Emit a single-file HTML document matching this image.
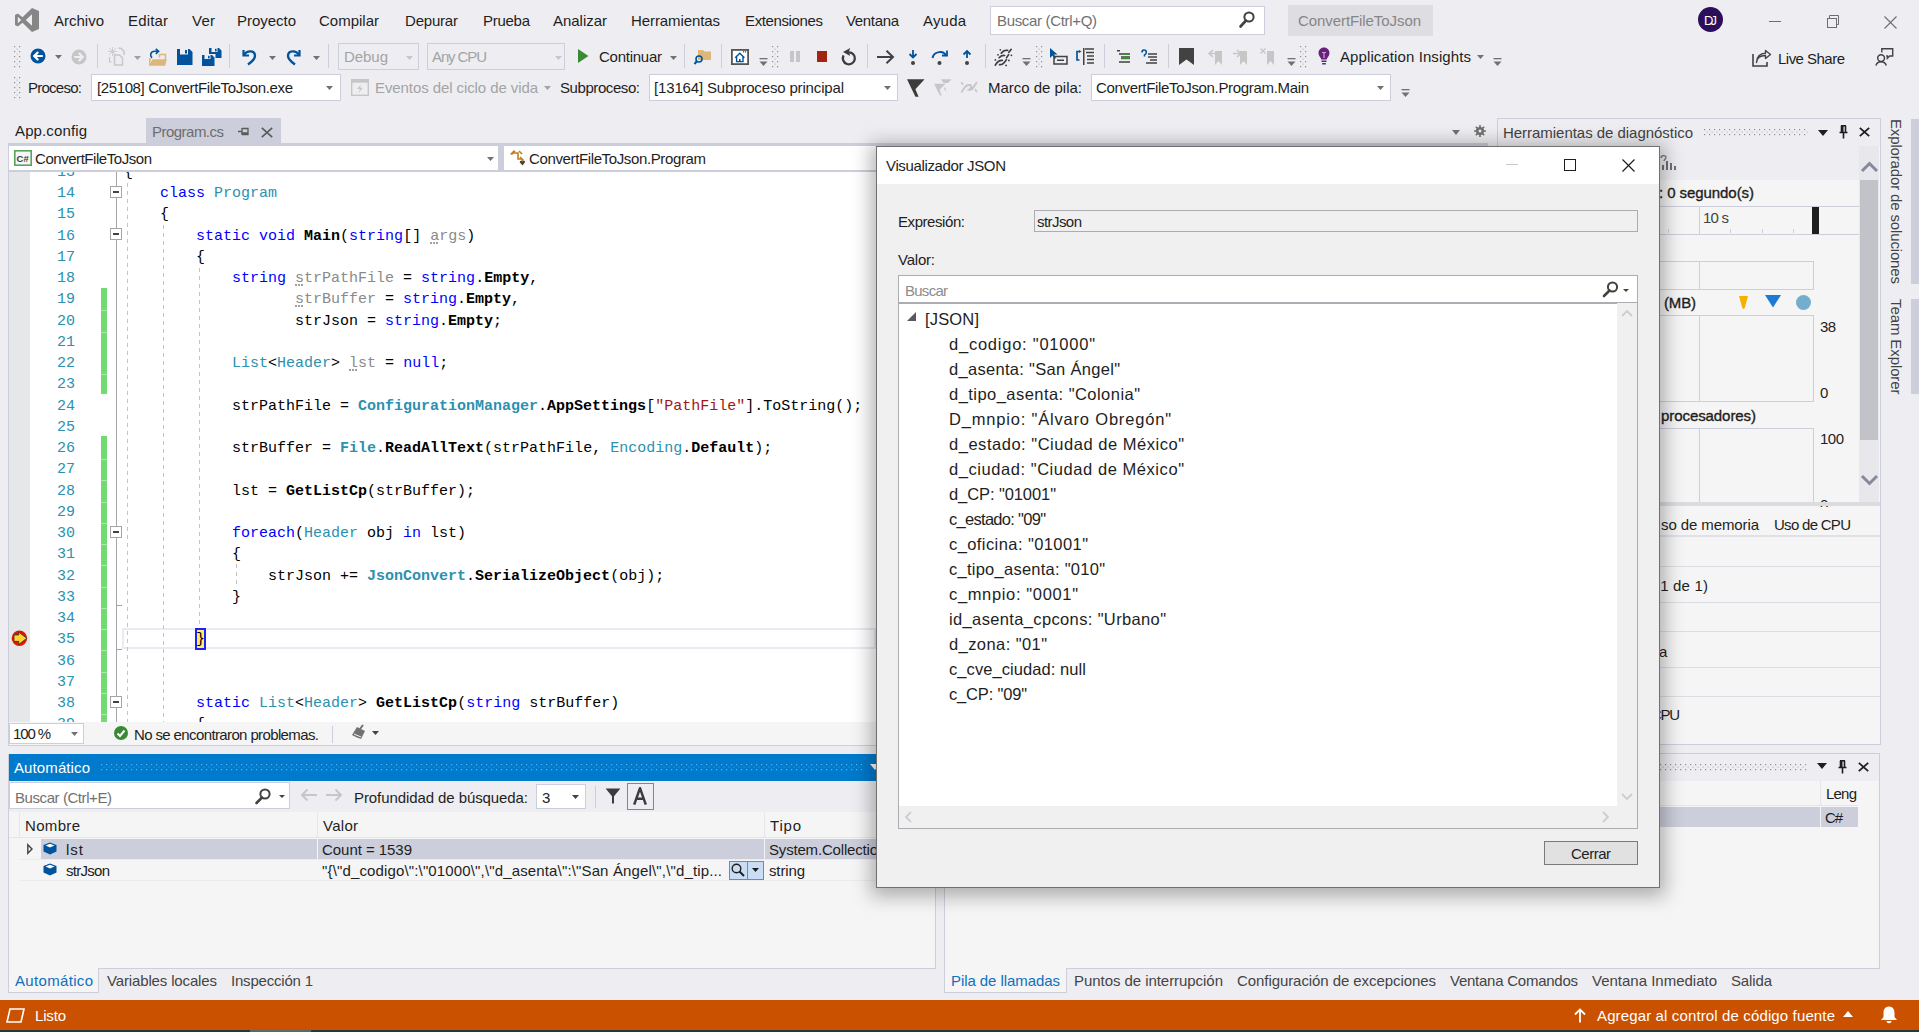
<!DOCTYPE html>
<html><head><meta charset="utf-8"><style>*{box-sizing:border-box;margin:0;padding:0}
html,body{width:1919px;height:1032px;overflow:hidden;background:#EEEEF2;font-family:"Liberation Sans",sans-serif;font-size:15px;color:#1E1E1E;position:relative}
.a{position:absolute}
svg.a{overflow:visible}
.t{position:absolute;white-space:pre;line-height:1}
</style></head><body>
<svg class="a" style="left:15px;top:8px;" width="24" height="24" viewBox="0 0 24 24"><path d="M17 0 L24 3 L24 21 L17 24 L7.5 14.8 L2.8 18.5 L0 17 L0 7 L2.8 5.5 L7.5 9.2 Z M17 6.3 L10.8 12 L17 17.7 Z M2.8 8.8 L2.8 15.2 L6.2 12 Z" fill="#868686" fill-rule="evenodd"/></svg><span class="t" id="t1" style="left:54px;top:13.00px;font-size:15px;color:#1E1E1E;font-weight:normal;font-family:'Liberation Sans';letter-spacing:-0.005px">Archivo</span><span class="t" id="t2" style="left:128px;top:13.00px;font-size:15px;color:#1E1E1E;font-weight:normal;font-family:'Liberation Sans';letter-spacing:0.163px">Editar</span><span class="t" id="t3" style="left:192px;top:13.00px;font-size:15px;color:#1E1E1E;font-weight:normal;font-family:'Liberation Sans';letter-spacing:0.242px">Ver</span><span class="t" id="t4" style="left:237px;top:13.00px;font-size:15px;color:#1E1E1E;font-weight:normal;font-family:'Liberation Sans';letter-spacing:-0.029px">Proyecto</span><span class="t" id="t5" style="left:319px;top:13.00px;font-size:15px;color:#1E1E1E;font-weight:normal;font-family:'Liberation Sans';letter-spacing:-0.002px">Compilar</span><span class="t" id="t6" style="left:405px;top:13.00px;font-size:15px;color:#1E1E1E;font-weight:normal;font-family:'Liberation Sans';letter-spacing:-0.201px">Depurar</span><span class="t" id="t7" style="left:483px;top:13.00px;font-size:15px;color:#1E1E1E;font-weight:normal;font-family:'Liberation Sans';letter-spacing:-0.275px">Prueba</span><span class="t" id="t8" style="left:553px;top:13.00px;font-size:15px;color:#1E1E1E;font-weight:normal;font-family:'Liberation Sans';letter-spacing:-0.029px">Analizar</span><span class="t" id="t9" style="left:631px;top:13.00px;font-size:15px;color:#1E1E1E;font-weight:normal;font-family:'Liberation Sans';letter-spacing:-0.094px">Herramientas</span><span class="t" id="t10" style="left:745px;top:13.00px;font-size:15px;color:#1E1E1E;font-weight:normal;font-family:'Liberation Sans';letter-spacing:-0.372px">Extensiones</span><span class="t" id="t11" style="left:846px;top:13.00px;font-size:15px;color:#1E1E1E;font-weight:normal;font-family:'Liberation Sans';letter-spacing:-0.344px">Ventana</span><span class="t" id="t12" style="left:923px;top:13.00px;font-size:15px;color:#1E1E1E;font-weight:normal;font-family:'Liberation Sans';letter-spacing:0.184px">Ayuda</span><div class="a" style="left:990px;top:6px;width:275px;height:29px;background:#FFFFFF;border:1px solid #CCCEDB"></div><span class="t" id="t13" style="left:997px;top:13.00px;font-size:15px;color:#717171;font-weight:normal;font-family:'Liberation Sans';letter-spacing:-0.329px">Buscar (Ctrl+Q)</span><svg class="a" style="left:1239px;top:11px;" width="16" height="17" viewBox="0 0 16 17"><circle cx="10" cy="6" r="4.6" fill="none" stroke="#424242" stroke-width="2"/><path d="M7 9.5 L1.5 15.5" stroke="#424242" stroke-width="2.6" stroke-linecap="round"/></svg><div class="a" style="left:1288px;top:5px;width:145px;height:31px;background:#DDDDE2"></div><span class="t" id="t14" style="left:1298px;top:13.00px;font-size:15px;color:#868686;font-weight:normal;font-family:'Liberation Sans';letter-spacing:-0.076px">ConvertFileToJson</span><div class="a" style="left:1698px;top:7px;width:25px;height:25px;border-radius:50%;background:#2B0F5A"></div><span class="t" id="t15" style="left:1704px;top:13.73px;font-size:13px;color:#FFFFFF;font-weight:normal;font-family:'Liberation Sans';letter-spacing:-2.891px">DJ</span><div class="a" style="left:1769px;top:21px;width:12px;height:1px;background:#6E6E6E"></div><svg class="a" style="left:1826px;top:15px;" width="14" height="14" viewBox="0 0 14 14"><rect x="1.5" y="3.5" width="9" height="9" fill="none" stroke="#6E6E6E" stroke-width="1"/><path d="M3.5 3.5 V0.5 H12.5 V9.5 H10.5" fill="none" stroke="#6E6E6E" stroke-width="1"/></svg><svg class="a" style="left:1884px;top:16px;" width="13" height="13" viewBox="0 0 13 13"><path d="M0.5 0.5 L12.5 12.5 M12.5 0.5 L0.5 12.5" stroke="#6E6E6E" stroke-width="1.1"/></svg><svg class="a" style="left:14px;top:46px" width="7" height="22"><defs><pattern id="p1" width="5" height="5" patternUnits="userSpaceOnUse"><rect x="0" y="0" width="1.2" height="1.2" fill="#8E8E8E"/><rect x="2.5" y="2.5" width="1.2" height="1.2" fill="#BDBDC2"/></pattern></defs><rect width="7" height="22" fill="url(#p1)"/></svg><svg class="a" style="left:30px;top:48px;" width="16" height="16" viewBox="0 0 16 16"><circle cx="8" cy="8" r="7.5" fill="#00539C"/><path d="M4 8 H12 M4.2 8 L7.6 4.6 M4.2 8 L7.6 11.4" stroke="#fff" stroke-width="2.2" fill="none" stroke-linecap="round"/></svg><svg class="a" style="left:55px;top:55px;" width="7" height="4" viewBox="0 0 7 4"><path d="M0 0 L7 0 L3.5 4 Z" fill="#717171"/></svg><svg class="a" style="left:71px;top:49px;" width="16" height="16" viewBox="0 0 16 16"><circle cx="8" cy="8" r="7.5" fill="#C6C6C6"/><path d="M4 8 H12 M11.8 8 L8.4 4.6 M11.8 8 L8.4 11.4" stroke="#EEEEF2" stroke-width="2.2" fill="none" stroke-linecap="round"/></svg><div class="a" style="left:97px;top:44px;width:1px;height:24px;background:#CCCEDB"></div><svg class="a" style="left:108px;top:47px;" width="18" height="19" viewBox="0 0 18 19"><path d="M4.5 0 V9 M0 4.5 H9 M1.3 1.3 L7.7 7.7 M7.7 1.3 L1.3 7.7" stroke="#C8C8C8" stroke-width="0.9"/><path d="M10.5 1.2 H13 L16 4.2 V8" fill="none" stroke="#C8C8C8" stroke-width="1.5"/><path d="M6.5 8 H11.5 L14.5 11 V18 H6.5 Z" fill="none" stroke="#C8C8C8" stroke-width="1.5"/><path d="M1.5 10 V15 H3.5" fill="none" stroke="#C8C8C8" stroke-width="1.2"/></svg><svg class="a" style="left:134px;top:56px;" width="7" height="4" viewBox="0 0 7 4"><path d="M0 0 L7 0 L3.5 4 Z" fill="#A0A0A0"/></svg><svg class="a" style="left:149px;top:48px;" width="18" height="18" viewBox="0 0 18 18"><path d="M10.5 9.5 V6.5 H16.5 V12" fill="none" stroke="#DCB67A" stroke-width="1.5"/><path d="M0.9 10 V17.5" stroke="#DCB67A" stroke-width="1.6"/><path d="M3.5 11.3 H17.8 L16.2 17.8 H0.3 Z" fill="#DCB67A"/><path d="M3 9.8 C0.5 7.5 1.5 3.3 5.5 3.3 H9.2" fill="none" stroke="#00539C" stroke-width="1.6"/><path d="M6.8 0.8 L9.6 3.3 L6.8 5.9" fill="none" stroke="#00539C" stroke-width="1.6"/></svg><svg class="a" style="left:177px;top:49px;" width="16" height="16" viewBox="0 0 16 16"><path d="M0 0 H12.5 L15.5 3 V16 H0 Z M3 0 V5.5 H11 V0 Z" fill="#00539C" fill-rule="evenodd"/><rect x="8" y="1" width="2" height="3.5" fill="#00539C"/></svg><svg class="a" style="left:202px;top:48px;" width="20" height="18" viewBox="0 0 20 18"><path d="M7 0 H17 L19.5 2.5 V10 H7 Z M9.5 0 V4 H15.5 V0 Z" fill="#00539C" fill-rule="evenodd"/><rect x="13" y="0.8" width="1.6" height="2.6" fill="#00539C"/><rect x="-1" y="6" width="14.5" height="13" fill="#EEEEF2"/><path d="M0 7 H10 L12.5 9.5 V18 H0 Z M2.5 7 V11 H8.5 V7 Z" fill="#00539C" fill-rule="evenodd"/><rect x="6" y="7.8" width="1.6" height="2.6" fill="#00539C"/></svg><div class="a" style="left:229px;top:44px;width:1px;height:24px;background:#CCCEDB"></div><svg class="a" style="left:241px;top:47px;" width="17" height="18" viewBox="0 0 17 18"><path d="M2.5 3 V8.5 H8" fill="none" stroke="#00539C" stroke-width="2.2"/><path d="M3 8 C6 3 14 3 14 9 C14 12 12 14 7 17.5" fill="none" stroke="#00539C" stroke-width="2.4"/></svg><svg class="a" style="left:269px;top:56px;" width="7" height="4" viewBox="0 0 7 4"><path d="M0 0 L7 0 L3.5 4 Z" fill="#717171"/></svg><svg class="a" style="left:285px;top:47px;" width="17" height="18" viewBox="0 0 17 18"><path d="M14.5 3 V8.5 H9" fill="none" stroke="#00539C" stroke-width="2.2"/><path d="M14 8 C11 3 3 3 3 9 C3 12 5 14 10 17.5" fill="none" stroke="#00539C" stroke-width="2.4"/></svg><svg class="a" style="left:313px;top:56px;" width="7" height="4" viewBox="0 0 7 4"><path d="M0 0 L7 0 L3.5 4 Z" fill="#717171"/></svg><div class="a" style="left:328px;top:44px;width:1px;height:24px;background:#CCCEDB"></div><div class="a" style="left:338px;top:43px;width:81px;height:27px;border:1px solid #CCCEDB"></div><span class="t" id="t16" style="left:344px;top:49.00px;font-size:15px;color:#A2A4A5;font-weight:normal;font-family:'Liberation Sans';letter-spacing:-0.051px">Debug</span><svg class="a" style="left:406px;top:56px;" width="7" height="4" viewBox="0 0 7 4"><path d="M0 0 L7 0 L3.5 4 Z" fill="#C6C6CE"/></svg><div class="a" style="left:427px;top:43px;width:138px;height:27px;border:1px solid #CCCEDB"></div><span class="t" id="t17" style="left:432px;top:49.00px;font-size:15px;color:#A2A4A5;font-weight:normal;font-family:'Liberation Sans';letter-spacing:-1.115px">Any CPU</span><svg class="a" style="left:555px;top:56px;" width="7" height="4" viewBox="0 0 7 4"><path d="M0 0 L7 0 L3.5 4 Z" fill="#C6C6CE"/></svg><svg class="a" style="left:578px;top:49px;" width="11" height="14" viewBox="0 0 11 14"><path d="M0 0 L10.5 7 L0 14 Z" fill="#388A34"/></svg><span class="t" id="t18" style="left:599px;top:49.00px;font-size:15px;color:#1E1E1E;font-weight:normal;font-family:'Liberation Sans';letter-spacing:-0.256px">Continuar</span><svg class="a" style="left:670px;top:56px;" width="7" height="4" viewBox="0 0 7 4"><path d="M0 0 L7 0 L3.5 4 Z" fill="#717171"/></svg><div class="a" style="left:684px;top:44px;width:1px;height:24px;background:#CCCEDB"></div><svg class="a" style="left:694px;top:48px;" width="18" height="17" viewBox="0 0 18 17"><path d="M4 2 H9 L10.5 3.5 H17 V12 H4 Z" fill="#DCB67A"/><circle cx="5" cy="11" r="3" fill="none" stroke="#00539C" stroke-width="1.6"/><path d="M3 13 L0.5 16" stroke="#00539C" stroke-width="2"/></svg><div class="a" style="left:721px;top:44px;width:1px;height:24px;background:#CCCEDB"></div><svg class="a" style="left:731px;top:49px;" width="18" height="16" viewBox="0 0 18 16"><rect x="0.9" y="0.9" width="16.2" height="14.2" fill="#FFFFFF" stroke="#555555" stroke-width="1.8"/><path d="M4.2 8.8 L8.8 4.2 L13.4 8.8 M5.6 7.8 V12.6 H12 V7.8" fill="none" stroke="#00539C" stroke-width="1.4"/><rect x="8" y="10" width="1.6" height="2.6" fill="#00539C"/><rect x="12" y="2.2" width="1.2" height="1.2" fill="#424242"/><rect x="14" y="2.2" width="1.2" height="1.2" fill="#424242"/></svg><svg class="a" style="left:759px;top:58px;" width="9" height="9" viewBox="0 0 9 9"><rect x="0.5" y="0" width="8" height="1.3" fill="#717171"/><path d="M0.5 3.5 L8.5 3.5 L4.5 8 Z" fill="#717171"/></svg><svg class="a" style="left:772px;top:46px" width="7" height="22"><defs><pattern id="p2" width="5" height="5" patternUnits="userSpaceOnUse"><rect x="0" y="0" width="1.2" height="1.2" fill="#8E8E8E"/><rect x="2.5" y="2.5" width="1.2" height="1.2" fill="#BDBDC2"/></pattern></defs><rect width="7" height="22" fill="url(#p2)"/></svg><div class="a" style="left:790px;top:51px;width:4px;height:11px;background:#C6C6C6"></div><div class="a" style="left:796px;top:51px;width:4px;height:11px;background:#C6C6C6"></div><div class="a" style="left:817px;top:51px;width:10px;height:11px;background:#A1260D"></div><svg class="a" style="left:841px;top:48px;" width="16" height="18" viewBox="0 0 16 18"><path d="M7.6 4.3 A6 6 0 1 1 2.6 7.4" fill="none" stroke="#3C3C3C" stroke-width="2.3"/><path d="M2 4.1 L9.2 0 L7.8 4.1 L9.2 7.9 Z" fill="#3C3C3C"/></svg><div class="a" style="left:867px;top:44px;width:1px;height:24px;background:#CCCEDB"></div><svg class="a" style="left:877px;top:50px;" width="18" height="14" viewBox="0 0 18 14"><path d="M0 7 H16 M9.5 0.8 L16 7 L9.5 13.2" fill="none" stroke="#424242" stroke-width="2"/></svg><svg class="a" style="left:908px;top:50px;" width="10" height="16" viewBox="0 0 10 16"><path d="M5 0 V7 M1.5 4 L5 7.5 L8.5 4" fill="none" stroke="#00539C" stroke-width="1.8"/><circle cx="5" cy="13" r="2" fill="#424242"/></svg><svg class="a" style="left:931px;top:49px;" width="18" height="17" viewBox="0 0 18 17"><path d="M1.5 9 C3 2 13 1 15 7" fill="none" stroke="#00539C" stroke-width="2"/><path d="M11 6.5 H16 V1.5" fill="none" stroke="#00539C" stroke-width="1.8"/><circle cx="8.5" cy="14" r="2" fill="#424242"/></svg><svg class="a" style="left:962px;top:50px;" width="10" height="16" viewBox="0 0 10 16"><path d="M5 8 V1 M1.5 4.5 L5 1 L8.5 4.5" fill="none" stroke="#00539C" stroke-width="1.8"/><circle cx="5" cy="13" r="2" fill="#424242"/></svg><div class="a" style="left:985px;top:44px;width:1px;height:24px;background:#CCCEDB"></div><svg class="a" style="left:994px;top:48px;" width="18" height="18" viewBox="0 0 18 18"><path d="M7.3 5.3 C9 2.5 11 2 13.6 2.3 M14.9 4.3 L17.2 1.3 M5.1 9.7 C6.5 8 8.5 7.3 10.6 7.5 M12.6 9.6 L14.6 6.6 M1.3 17.2 C3 14 5 12.3 8.3 12.4 M5.6 16.7 C9 17 11 14 12.4 11.6" fill="none" stroke="#3C3C3C" stroke-width="1.7" stroke-linecap="round"/><g fill="#3C3C3C"><circle cx="6.3" cy="1.8" r="0.9"/><circle cx="4" cy="6.8" r="0.9"/><circle cx="1.4" cy="11.9" r="0.9"/><circle cx="17.4" cy="7.3" r="0.9"/><circle cx="14.9" cy="12.4" r="0.9"/><circle cx="12.1" cy="17.4" r="0.9"/></g></svg><svg class="a" style="left:1022px;top:58px;" width="9" height="9" viewBox="0 0 9 9"><rect x="0.5" y="0" width="8" height="1.3" fill="#717171"/><path d="M0.5 3.5 L8.5 3.5 L4.5 8 Z" fill="#717171"/></svg><svg class="a" style="left:1036px;top:46px" width="7" height="22"><defs><pattern id="p3" width="5" height="5" patternUnits="userSpaceOnUse"><rect x="0" y="0" width="1.2" height="1.2" fill="#8E8E8E"/><rect x="2.5" y="2.5" width="1.2" height="1.2" fill="#BDBDC2"/></pattern></defs><rect width="7" height="22" fill="url(#p3)"/></svg><svg class="a" style="left:1050px;top:48px;" width="18" height="17" viewBox="0 0 18 17"><path d="M0 0 L0 10 L2.5 7.5 L4.5 11 L6 10 L4 6.5 L7.5 6.5 Z" fill="#00539C"/><rect x="4" y="8.5" width="13" height="7.5" fill="none" stroke="#424242" stroke-width="1.5"/><rect x="7" y="11.5" width="7" height="1.5" fill="#424242"/></svg><svg class="a" style="left:1076px;top:48px;" width="19" height="17" viewBox="0 0 19 17"><path d="M3.5 3.5 H1 V12 H3.5" fill="none" stroke="#00539C" stroke-width="1.7"/><path d="M3 5 L5.5 3.5 L3 2" fill="#00539C"/><rect x="7" y="0" width="1.5" height="17" fill="#424242"/><path d="M9 1 H18 M10 4.5 H18 M11 8 H18 M11 11.5 H18 M11 15 H18" stroke="#424242" stroke-width="1.4"/></svg><div class="a" style="left:1104px;top:44px;width:1px;height:24px;background:#CCCEDB"></div><svg class="a" style="left:1117px;top:50px;" width="13" height="13" viewBox="0 0 13 13"><path d="M0 0.7 H3 M2 4 H13 M4 7 H13 M2 12 H13" stroke="#424242" stroke-width="1.4"/><path d="M4 4 H13 M4 8.5 H13" stroke="#388A34" stroke-width="1.4"/></svg><svg class="a" style="left:1141px;top:49px;" width="16" height="14" viewBox="0 0 16 14"><path d="M3 1 C1 1 1 3 1 3.5 M3 1 C6 1 6 5 3.5 6 V7.5" fill="none" stroke="#00539C" stroke-width="1.6"/><path d="M7 5 H16 M7 8 H16 M9 11 H16 M5 14 H16" stroke="#424242" stroke-width="1.4"/></svg><div class="a" style="left:1168px;top:44px;width:1px;height:24px;background:#CCCEDB"></div><svg class="a" style="left:1179px;top:48px;" width="15" height="17" viewBox="0 0 15 17"><path d="M0 0 H15 V17 L7.5 11.5 L0 17 Z" fill="#424242"/></svg><svg class="a" style="left:1208px;top:48px;" width="15" height="17" viewBox="0 0 15 17"><path d="M5 2 L1 5.5 L5 9 M1 5.5 H8" fill="none" stroke="#C6C6C6" stroke-width="1.5"/><path d="M7 3 H14 V17 L10.5 13 L7 17 Z" fill="#C6C6C6"/></svg><svg class="a" style="left:1233px;top:48px;" width="15" height="17" viewBox="0 0 15 17"><path d="M4 2 L8 5.5 L4 9 M0 5.5 H8" fill="none" stroke="#C6C6C6" stroke-width="1.5"/><path d="M7 3 H14 V17 L10.5 13 L7 17 Z" fill="#C6C6C6"/></svg><svg class="a" style="left:1260px;top:48px;" width="15" height="17" viewBox="0 0 15 17"><path d="M0.5 0.5 L5.5 5.5 M5.5 0.5 L0.5 5.5" stroke="#C6C6C6" stroke-width="1.3"/><path d="M7 3 H14 V17 L10.5 13 L7 17 Z" fill="#C6C6C6"/></svg><svg class="a" style="left:1287px;top:58px;" width="9" height="9" viewBox="0 0 9 9"><rect x="0.5" y="0" width="8" height="1.3" fill="#717171"/><path d="M0.5 3.5 L8.5 3.5 L4.5 8 Z" fill="#717171"/></svg><svg class="a" style="left:1300px;top:46px" width="7" height="22"><defs><pattern id="p4" width="5" height="5" patternUnits="userSpaceOnUse"><rect x="0" y="0" width="1.2" height="1.2" fill="#8E8E8E"/><rect x="2.5" y="2.5" width="1.2" height="1.2" fill="#BDBDC2"/></pattern></defs><rect width="7" height="22" fill="url(#p4)"/></svg><svg class="a" style="left:1318px;top:47px;" width="12" height="18" viewBox="0 0 12 18"><path d="M6 0.5 C2.7 0.5 0.5 3 0.5 6 C0.5 9 3 10.5 3.3 12.5 H8.7 C9 10.5 11.5 9 11.5 6 C11.5 3 9.3 0.5 6 0.5 Z" fill="#68217A"/><path d="M4 5.5 H8 M6 5.5 V11" stroke="#C8A2D0" stroke-width="1.2"/><rect x="3.5" y="13.5" width="5" height="1.5" fill="#68217A"/><rect x="4.2" y="16" width="3.6" height="1.5" fill="#68217A"/></svg><span class="t" id="t19" style="left:1340px;top:49.00px;font-size:15px;color:#1E1E1E;font-weight:normal;font-family:'Liberation Sans';letter-spacing:0.092px">Application Insights</span><svg class="a" style="left:1477px;top:55px;" width="7" height="4" viewBox="0 0 7 4"><path d="M0 0 L7 0 L3.5 4 Z" fill="#717171"/></svg><svg class="a" style="left:1493px;top:58px;" width="9" height="9" viewBox="0 0 9 9"><rect x="0.5" y="0" width="8" height="1.3" fill="#717171"/><path d="M0.5 3.5 L8.5 3.5 L4.5 8 Z" fill="#717171"/></svg><svg class="a" style="left:1752px;top:50px;" width="19" height="17" viewBox="0 0 19 17"><path d="M1 4 V16 H15 V12" fill="none" stroke="#424242" stroke-width="1.6"/><path d="M4.5 12.5 C5 7 9 5.5 13.5 5.5 V8.5 L18.5 4.5 L13.5 0.5 V3.2 C8 3.2 4.5 7 4.5 12.5 Z" fill="none" stroke="#424242" stroke-width="1.4" stroke-linejoin="round"/></svg><span class="t" id="t20" style="left:1778px;top:51.00px;font-size:15px;color:#1E1E1E;font-weight:normal;font-family:'Liberation Sans';letter-spacing:-0.524px">Live Share</span><svg class="a" style="left:1875px;top:48px;" width="19" height="18" viewBox="0 0 19 18"><path d="M6.8 4.6 V0.7 H17.7 V8 H14.6 L12.4 10.2 V8 H11.2" fill="none" stroke="#424242" stroke-width="1.4"/><circle cx="6.1" cy="10.1" r="3.4" fill="none" stroke="#424242" stroke-width="1.5"/><path d="M0.9 17.4 C2 14.5 4 13.7 6.1 13.7 C8.2 13.7 10.2 14.5 11.3 17.4" fill="none" stroke="#424242" stroke-width="1.5"/></svg><svg class="a" style="left:14px;top:77px" width="7" height="22"><defs><pattern id="p5" width="5" height="5" patternUnits="userSpaceOnUse"><rect x="0" y="0" width="1.2" height="1.2" fill="#8E8E8E"/><rect x="2.5" y="2.5" width="1.2" height="1.2" fill="#BDBDC2"/></pattern></defs><rect width="7" height="22" fill="url(#p5)"/></svg><span class="t" id="t21" style="left:28px;top:80.00px;font-size:15px;color:#1E1E1E;font-weight:normal;font-family:'Liberation Sans';letter-spacing:-0.743px">Proceso:</span><div class="a" style="left:91px;top:74px;width:250px;height:27px;background:#FFFFFF;border:1px solid #CCCEDB"></div><span class="t" id="t22" style="left:97px;top:80.00px;font-size:15px;color:#1E1E1E;font-weight:normal;font-family:'Liberation Sans';letter-spacing:-0.386px">[25108] ConvertFileToJson.exe</span><svg class="a" style="left:326px;top:86px;" width="7" height="4" viewBox="0 0 7 4"><path d="M0 0 L7 0 L3.5 4 Z" fill="#717171"/></svg><svg class="a" style="left:351px;top:79px;" width="18" height="17" viewBox="0 0 18 17"><rect x="0.7" y="0.7" width="16.6" height="15.6" fill="none" stroke="#C6C6C6" stroke-width="1.4"/><rect x="0.7" y="0.7" width="16.6" height="3" fill="#C6C6C6"/><path d="M10 5.5 L6 10 H9 L7.5 14 L12 8.8 H9 Z" fill="#C6C6C6"/></svg><span class="t" id="t23" style="left:375px;top:80.00px;font-size:15px;color:#A2A4A5;font-weight:normal;font-family:'Liberation Sans';letter-spacing:-0.088px">Eventos del ciclo de vida</span><svg class="a" style="left:544px;top:86px;" width="7" height="4" viewBox="0 0 7 4"><path d="M0 0 L7 0 L3.5 4 Z" fill="#A2A4A5"/></svg><span class="t" id="t24" style="left:560px;top:80.00px;font-size:15px;color:#1E1E1E;font-weight:normal;font-family:'Liberation Sans';letter-spacing:-0.423px">Subproceso:</span><div class="a" style="left:649px;top:74px;width:249px;height:27px;background:#FFFFFF;border:1px solid #CCCEDB"></div><span class="t" id="t25" style="left:654px;top:80.00px;font-size:15px;color:#1E1E1E;font-weight:normal;font-family:'Liberation Sans';letter-spacing:-0.159px">[13164] Subproceso principal</span><svg class="a" style="left:884px;top:86px;" width="7" height="4" viewBox="0 0 7 4"><path d="M0 0 L7 0 L3.5 4 Z" fill="#717171"/></svg><svg class="a" style="left:906px;top:78px;" width="20" height="20" viewBox="0 0 20 20"><path d="M1 1.2 H18.6 L9.4 11.3 L12.6 18.8 H9.4 Z" fill="#3C3C3C"/></svg><svg class="a" style="left:933px;top:78px;" width="20" height="20" viewBox="0 0 20 20"><path d="M8 1.2 H18.5 L15 5 H10.5 Z" fill="#C6C6C6"/><path d="M1 5.8 H12.6 L6.6 11.6 L8.6 17.5 H7 Z" fill="#C6C6C6"/><path d="M11.4 9.4 L12.8 12.6" stroke="#C6C6C6" stroke-width="1.2"/></svg><svg class="a" style="left:960px;top:78px;" width="20" height="20" viewBox="0 0 20 20"><path d="M1.8 13.8 L5 9 C6.2 7.3 8.5 6.8 10.2 7 C12 7.3 11 10.5 9 11.8 C12 12.3 13.5 9.5 16.5 4.8" fill="none" stroke="#C6C6C6" stroke-width="1.9" stroke-linecap="round"/><path d="M1.5 4.6 L2.8 6.2 M15.4 11.6 L16.6 13.6" stroke="#C6C6C6" stroke-width="1.6" stroke-linecap="round"/></svg><span class="t" id="t26" style="left:988px;top:80.00px;font-size:15px;color:#1E1E1E;font-weight:normal;font-family:'Liberation Sans';letter-spacing:-0.017px">Marco de pila:</span><div class="a" style="left:1091px;top:74px;width:300px;height:27px;background:#FFFFFF;border:1px solid #CCCEDB"></div><span class="t" id="t27" style="left:1096px;top:80.00px;font-size:15px;color:#1E1E1E;font-weight:normal;font-family:'Liberation Sans';letter-spacing:-0.331px">ConvertFileToJson.Program.Main</span><svg class="a" style="left:1377px;top:86px;" width="7" height="4" viewBox="0 0 7 4"><path d="M0 0 L7 0 L3.5 4 Z" fill="#717171"/></svg><svg class="a" style="left:1401px;top:89px;" width="9" height="9" viewBox="0 0 9 9"><rect x="0.5" y="0" width="8" height="1.3" fill="#717171"/><path d="M0.5 3.5 L8.5 3.5 L4.5 8 Z" fill="#717171"/></svg><span class="t" id="t28" style="left:15px;top:123.00px;font-size:15px;color:#1E1E1E;font-weight:normal;font-family:'Liberation Sans';letter-spacing:0.123px">App.config</span><div class="a" style="left:146px;top:118px;width:135px;height:25px;background:#CCCEDB"></div><span class="t" id="t29" style="left:152px;top:124.00px;font-size:15px;color:#6D6D6D;font-weight:normal;font-family:'Liberation Sans';letter-spacing:-0.521px">Program.cs</span><svg class="a" style="left:238px;top:127px;" width="11" height="10" viewBox="0 0 11 10"><path d="M0 4.5 H4 M4 1 V8 M4 1.5 H10 V7.5 H4 M4 6 H10" fill="none" stroke="#5A5A5A" stroke-width="1.3"/></svg><svg class="a" style="left:261px;top:127px;" width="12" height="11" viewBox="0 0 12 11"><path d="M0.8 0.8 L11.2 10.2 M11.2 0.8 L0.8 10.2" stroke="#5A5A5A" stroke-width="1.6"/></svg><svg class="a" style="left:1452px;top:130px;" width="8" height="5" viewBox="0 0 8 5"><path d="M0 0 L8 0 L4.0 5 Z" fill="#717171"/></svg><svg class="a" style="left:1474px;top:125px;" width="12" height="12" viewBox="0 0 12 12"><circle cx="6" cy="6" r="3" fill="none" stroke="#717171" stroke-width="2.2"/><path d="M6 0 V12 M0 6 H12 M1.8 1.8 L10.2 10.2 M10.2 1.8 L1.8 10.2" stroke="#717171" stroke-width="1.6"/><circle cx="6" cy="6" r="1.5" fill="#EEEEF2"/></svg><div class="a" style="left:9px;top:143px;width:1479px;height:3px;background:#CCCEDB"></div><div class="a" style="left:8px;top:143px;width:1px;height:603px;background:#CCCEDB"></div><div class="a" style="left:9px;top:146px;width:489px;height:24px;background:#FFFFFF"></div><div class="a" style="left:498px;top:146px;width:6px;height:24px;background:#CCCEDB"></div><div class="a" style="left:504px;top:146px;width:372px;height:24px;background:#FFFFFF"></div><div class="a" style="left:9px;top:170px;width:867px;height:2px;background:#CCCEDB"></div><svg class="a" style="left:14px;top:150px;" width="18" height="16" viewBox="0 0 18 16"><rect x="0.8" y="0.8" width="16.4" height="14.4" fill="#F6F6F6" stroke="#5AA55A" stroke-width="1.6"/><text x="2.6" y="11.8" font-family="Liberation Sans" font-size="9.5" font-weight="bold" fill="#3C3C3C">C#</text></svg><span class="t" id="t30" style="left:35px;top:151.00px;font-size:15px;color:#1E1E1E;font-weight:normal;font-family:'Liberation Sans';letter-spacing:-0.451px">ConvertFileToJson</span><svg class="a" style="left:487px;top:157px;" width="7" height="4" viewBox="0 0 7 4"><path d="M0 0 L7 0 L3.5 4 Z" fill="#717171"/></svg><svg class="a" style="left:508px;top:149px;" width="19" height="18" viewBox="0 0 19 18"><path d="M2 5 L6 1 L7.5 2.5 L4 6 Z" fill="#C27D1A"/><path d="M5 4 H10 V10 H14" fill="none" stroke="#C27D1A" stroke-width="1.6"/><path d="M11 2 L14 5" stroke="#C27D1A" stroke-width="1.6"/><path d="M12 8 L15 11 L12 14" fill="none" stroke="#C27D1A" stroke-width="1.6"/><path d="M14.5 12.5 C13 11 11 12 12.5 14 L14.5 16.5 L16.5 14 C18 12 16 11 14.5 12.5 Z" fill="#424242"/></svg><span class="t" id="t31" style="left:529px;top:151.00px;font-size:15px;color:#1E1E1E;font-weight:normal;font-family:'Liberation Sans';letter-spacing:-0.371px">ConvertFileToJson.Program</span><div class="a" style="left:9px;top:172px;width:867px;height:550px;background:#FFFFFF"></div><div class="a" style="left:9px;top:172px;width:21px;height:550px;background:#E6E7E8"></div><div class="a" style="left:30px;top:172px;width:846px;height:550px;overflow:hidden"><span class="t" id="t32" style="left:27px;top:-7.25px;font-size:15px;color:#2B91AF;font-weight:normal;font-family:'Liberation Mono'">13</span><span class="t" id="t33" style="left:27px;top:14.00px;font-size:15px;color:#2B91AF;font-weight:normal;font-family:'Liberation Mono'">14</span><span class="t" id="t34" style="left:27px;top:35.25px;font-size:15px;color:#2B91AF;font-weight:normal;font-family:'Liberation Mono'">15</span><span class="t" id="t35" style="left:27px;top:56.50px;font-size:15px;color:#2B91AF;font-weight:normal;font-family:'Liberation Mono'">16</span><span class="t" id="t36" style="left:27px;top:77.75px;font-size:15px;color:#2B91AF;font-weight:normal;font-family:'Liberation Mono'">17</span><span class="t" id="t37" style="left:27px;top:99.00px;font-size:15px;color:#2B91AF;font-weight:normal;font-family:'Liberation Mono'">18</span><span class="t" id="t38" style="left:27px;top:120.25px;font-size:15px;color:#2B91AF;font-weight:normal;font-family:'Liberation Mono'">19</span><span class="t" id="t39" style="left:27px;top:141.50px;font-size:15px;color:#2B91AF;font-weight:normal;font-family:'Liberation Mono'">20</span><span class="t" id="t40" style="left:27px;top:162.75px;font-size:15px;color:#2B91AF;font-weight:normal;font-family:'Liberation Mono'">21</span><span class="t" id="t41" style="left:27px;top:184.00px;font-size:15px;color:#2B91AF;font-weight:normal;font-family:'Liberation Mono'">22</span><span class="t" id="t42" style="left:27px;top:205.25px;font-size:15px;color:#2B91AF;font-weight:normal;font-family:'Liberation Mono'">23</span><span class="t" id="t43" style="left:27px;top:226.50px;font-size:15px;color:#2B91AF;font-weight:normal;font-family:'Liberation Mono'">24</span><span class="t" id="t44" style="left:27px;top:247.75px;font-size:15px;color:#2B91AF;font-weight:normal;font-family:'Liberation Mono'">25</span><span class="t" id="t45" style="left:27px;top:269.00px;font-size:15px;color:#2B91AF;font-weight:normal;font-family:'Liberation Mono'">26</span><span class="t" id="t46" style="left:27px;top:290.25px;font-size:15px;color:#2B91AF;font-weight:normal;font-family:'Liberation Mono'">27</span><span class="t" id="t47" style="left:27px;top:311.50px;font-size:15px;color:#2B91AF;font-weight:normal;font-family:'Liberation Mono'">28</span><span class="t" id="t48" style="left:27px;top:332.75px;font-size:15px;color:#2B91AF;font-weight:normal;font-family:'Liberation Mono'">29</span><span class="t" id="t49" style="left:27px;top:354.00px;font-size:15px;color:#2B91AF;font-weight:normal;font-family:'Liberation Mono'">30</span><span class="t" id="t50" style="left:27px;top:375.25px;font-size:15px;color:#2B91AF;font-weight:normal;font-family:'Liberation Mono'">31</span><span class="t" id="t51" style="left:27px;top:396.50px;font-size:15px;color:#2B91AF;font-weight:normal;font-family:'Liberation Mono'">32</span><span class="t" id="t52" style="left:27px;top:417.75px;font-size:15px;color:#2B91AF;font-weight:normal;font-family:'Liberation Mono'">33</span><span class="t" id="t53" style="left:27px;top:439.00px;font-size:15px;color:#2B91AF;font-weight:normal;font-family:'Liberation Mono'">34</span><span class="t" id="t54" style="left:27px;top:460.25px;font-size:15px;color:#2B91AF;font-weight:normal;font-family:'Liberation Mono'">35</span><span class="t" id="t55" style="left:27px;top:481.50px;font-size:15px;color:#2B91AF;font-weight:normal;font-family:'Liberation Mono'">36</span><span class="t" id="t56" style="left:27px;top:502.75px;font-size:15px;color:#2B91AF;font-weight:normal;font-family:'Liberation Mono'">37</span><span class="t" id="t57" style="left:27px;top:524.00px;font-size:15px;color:#2B91AF;font-weight:normal;font-family:'Liberation Mono'">38</span><span class="t" id="t58" style="left:27px;top:545.25px;font-size:15px;color:#2B91AF;font-weight:normal;font-family:'Liberation Mono'">39</span></div><div class="a" style="left:101px;top:288px;width:6px;height:106px;background:#70DB70"></div><div class="a" style="left:101px;top:436px;width:6px;height:286px;background:#70DB70"></div><div class="a" style="left:101px;top:310px;width:6px;height:1px;background:#A8E8A8"></div><div class="a" style="left:101px;top:332px;width:6px;height:1px;background:#A8E8A8"></div><div class="a" style="left:101px;top:374px;width:6px;height:1px;background:#A8E8A8"></div><div class="a" style="left:101px;top:459px;width:6px;height:1px;background:#A8E8A8"></div><div class="a" style="left:101px;top:480px;width:6px;height:1px;background:#A8E8A8"></div><div class="a" style="left:101px;top:502px;width:6px;height:1px;background:#A8E8A8"></div><div class="a" style="left:101px;top:523px;width:6px;height:1px;background:#A8E8A8"></div><div class="a" style="left:101px;top:544px;width:6px;height:1px;background:#A8E8A8"></div><div class="a" style="left:101px;top:565px;width:6px;height:1px;background:#A8E8A8"></div><div class="a" style="left:101px;top:587px;width:6px;height:1px;background:#A8E8A8"></div><div class="a" style="left:101px;top:608px;width:6px;height:1px;background:#A8E8A8"></div><div class="a" style="left:101px;top:629px;width:6px;height:1px;background:#A8E8A8"></div><div class="a" style="left:101px;top:650px;width:6px;height:1px;background:#A8E8A8"></div><div class="a" style="left:101px;top:672px;width:6px;height:1px;background:#A8E8A8"></div><div class="a" style="left:101px;top:693px;width:6px;height:1px;background:#A8E8A8"></div><div class="a" style="left:101px;top:714px;width:6px;height:1px;background:#A8E8A8"></div><div class="a" style="left:116px;top:172px;width:1px;height:550px;background:#A5A5A5"></div><div class="a" style="left:110px;top:186px;width:12px;height:12px;background:#FFFFFF;border:1px solid #A5A5A5"></div><div class="a" style="left:113px;top:191px;width:6px;height:1.5px;background:#424242"></div><div class="a" style="left:110px;top:228px;width:12px;height:12px;background:#FFFFFF;border:1px solid #A5A5A5"></div><div class="a" style="left:113px;top:233px;width:6px;height:1.5px;background:#424242"></div><div class="a" style="left:110px;top:526px;width:12px;height:12px;background:#FFFFFF;border:1px solid #A5A5A5"></div><div class="a" style="left:113px;top:531px;width:6px;height:1.5px;background:#424242"></div><div class="a" style="left:110px;top:696px;width:12px;height:12px;background:#FFFFFF;border:1px solid #A5A5A5"></div><div class="a" style="left:113px;top:701px;width:6px;height:1.5px;background:#424242"></div><div class="a" style="left:116px;top:605px;width:6px;height:1px;background:#A5A5A5"></div><div class="a" style="left:116px;top:649px;width:6px;height:1px;background:#A5A5A5"></div><div class="a" style="left:122px;top:628px;width:754px;height:21px;border:2px solid #EAEAF2"></div><div class="a" style="left:127px;top:183px;width:1px;height:539px;background-image:linear-gradient(#C4C4C4 50%,transparent 50%);background-size:1px 8px"></div><div class="a" style="left:163px;top:225px;width:1px;height:497px;background-image:linear-gradient(#C4C4C4 50%,transparent 50%);background-size:1px 8px"></div><div class="a" style="left:199px;top:268px;width:1px;height:360px;background-image:linear-gradient(#C4C4C4 50%,transparent 50%);background-size:1px 8px"></div><div class="a" style="left:236px;top:564px;width:1px;height:20px;background-image:linear-gradient(#C4C4C4 50%,transparent 50%);background-size:1px 8px"></div><svg class="a" style="left:11px;top:630px;" width="17" height="17" viewBox="0 0 17 17"><circle cx="8.4" cy="8.3" r="7.7" fill="#E51400"/><path d="M2.9 4.9 H7.75 V2.1 L15.9 8.3 L7.75 14.5 V11.4 H2.9 Z" fill="#FFD52E" stroke="#3C3C3C" stroke-width="1"/></svg><div class="a" style="left:195px;top:628px;width:11px;height:22px;background:#FFEE62;border:2px solid #2020FF"></div><div class="a" style="left:122px;top:172px;width:754px;height:550px;overflow:hidden"><div class="t" style="left:2px;top:-7.25px;font-family:'Liberation Mono';font-size:15px;color:#000"><span style="color:#000000">{</span></div><div class="t" style="left:2px;top:14.00px;font-family:'Liberation Mono';font-size:15px;color:#000"><span style="color:#000000">    </span><span style="color:#0000FF">class</span><span style="color:#000000"> </span><span style="color:#2B91AF">Program</span></div><div class="t" style="left:2px;top:35.25px;font-family:'Liberation Mono';font-size:15px;color:#000"><span style="color:#000000">    {</span></div><div class="t" style="left:2px;top:56.50px;font-family:'Liberation Mono';font-size:15px;color:#000"><span style="color:#000000">        </span><span style="color:#0000FF">static</span><span style="color:#000000"> </span><span style="color:#0000FF">void</span><span style="color:#000000"> </span><span style="color:#000000;font-weight:bold">Main</span><span style="color:#000000">(</span><span style="color:#0000FF">string</span><span style="color:#000000">[] </span><span style="color:#8A8A8A">args</span><span style="color:#000000">)</span></div><div class="t" style="left:2px;top:77.75px;font-family:'Liberation Mono';font-size:15px;color:#000"><span style="color:#000000">        {</span></div><div class="t" style="left:2px;top:99.00px;font-family:'Liberation Mono';font-size:15px;color:#000"><span style="color:#000000">            </span><span style="color:#0000FF">string</span><span style="color:#000000"> </span><span style="color:#8A8A8A">strPathFile</span><span style="color:#000000"> = </span><span style="color:#0000FF">string</span><span style="color:#000000">.</span><span style="color:#000000;font-weight:bold">Empty</span><span style="color:#000000">,</span></div><div class="t" style="left:2px;top:120.25px;font-family:'Liberation Mono';font-size:15px;color:#000"><span style="color:#000000">                   </span><span style="color:#8A8A8A">strBuffer</span><span style="color:#000000"> = </span><span style="color:#0000FF">string</span><span style="color:#000000">.</span><span style="color:#000000;font-weight:bold">Empty</span><span style="color:#000000">,</span></div><div class="t" style="left:2px;top:141.50px;font-family:'Liberation Mono';font-size:15px;color:#000"><span style="color:#000000">                   strJson = </span><span style="color:#0000FF">string</span><span style="color:#000000">.</span><span style="color:#000000;font-weight:bold">Empty</span><span style="color:#000000">;</span></div><div class="t" style="left:2px;top:184.00px;font-family:'Liberation Mono';font-size:15px;color:#000"><span style="color:#000000">            </span><span style="color:#2B91AF">List</span><span style="color:#000000">&lt;</span><span style="color:#2B91AF">Header</span><span style="color:#000000">&gt; </span><span style="color:#8A8A8A">lst</span><span style="color:#000000"> = </span><span style="color:#0000FF">null</span><span style="color:#000000">;</span></div><div class="t" style="left:2px;top:226.50px;font-family:'Liberation Mono';font-size:15px;color:#000"><span style="color:#000000">            strPathFile = </span><span style="color:#2B91AF;font-weight:bold">ConfigurationManager</span><span style="color:#000000">.</span><span style="color:#000000;font-weight:bold">AppSettings</span><span style="color:#000000">[</span><span style="color:#A31515">&quot;PathFile&quot;</span><span style="color:#000000">].ToString();</span></div><div class="t" style="left:2px;top:269.00px;font-family:'Liberation Mono';font-size:15px;color:#000"><span style="color:#000000">            strBuffer = </span><span style="color:#2B91AF;font-weight:bold">File</span><span style="color:#000000">.</span><span style="color:#000000;font-weight:bold">ReadAllText</span><span style="color:#000000">(strPathFile, </span><span style="color:#2B91AF">Encoding</span><span style="color:#000000">.</span><span style="color:#000000;font-weight:bold">Default</span><span style="color:#000000">);</span></div><div class="t" style="left:2px;top:311.50px;font-family:'Liberation Mono';font-size:15px;color:#000"><span style="color:#000000">            lst = </span><span style="color:#000000;font-weight:bold">GetListCp</span><span style="color:#000000">(strBuffer);</span></div><div class="t" style="left:2px;top:354.00px;font-family:'Liberation Mono';font-size:15px;color:#000"><span style="color:#000000">            </span><span style="color:#0000FF">foreach</span><span style="color:#000000">(</span><span style="color:#2B91AF">Header</span><span style="color:#000000"> obj </span><span style="color:#0000FF">in</span><span style="color:#000000"> lst)</span></div><div class="t" style="left:2px;top:375.25px;font-family:'Liberation Mono';font-size:15px;color:#000"><span style="color:#000000">            {</span></div><div class="t" style="left:2px;top:396.50px;font-family:'Liberation Mono';font-size:15px;color:#000"><span style="color:#000000">                strJson += </span><span style="color:#2B91AF;font-weight:bold">JsonConvert</span><span style="color:#000000">.</span><span style="color:#000000;font-weight:bold">SerializeObject</span><span style="color:#000000">(obj);</span></div><div class="t" style="left:2px;top:417.75px;font-family:'Liberation Mono';font-size:15px;color:#000"><span style="color:#000000">            }</span></div><div class="t" style="left:2px;top:460.25px;font-family:'Liberation Mono';font-size:15px;color:#000"><span style="color:#000000">        }</span></div><div class="t" style="left:2px;top:524.00px;font-family:'Liberation Mono';font-size:15px;color:#000"><span style="color:#000000">        </span><span style="color:#0000FF">static</span><span style="color:#000000"> </span><span style="color:#2B91AF">List</span><span style="color:#000000">&lt;</span><span style="color:#2B91AF">Header</span><span style="color:#000000">&gt; </span><span style="color:#000000;font-weight:bold">GetListCp</span><span style="color:#000000">(</span><span style="color:#0000FF">string</span><span style="color:#000000"> strBuffer)</span></div><div class="t" style="left:2px;top:545.25px;font-family:'Liberation Mono';font-size:15px;color:#000"><span style="color:#000000">        {</span></div></div><div class="a" style="left:430px;top:242px;width:2px;height:2px;background:#A0A0A0"></div><div class="a" style="left:433px;top:242px;width:2px;height:2px;background:#A0A0A0"></div><div class="a" style="left:436px;top:242px;width:2px;height:2px;background:#A0A0A0"></div><div class="a" style="left:295px;top:284px;width:2px;height:2px;background:#A0A0A0"></div><div class="a" style="left:298px;top:284px;width:2px;height:2px;background:#A0A0A0"></div><div class="a" style="left:301px;top:284px;width:2px;height:2px;background:#A0A0A0"></div><div class="a" style="left:295px;top:305px;width:2px;height:2px;background:#A0A0A0"></div><div class="a" style="left:298px;top:305px;width:2px;height:2px;background:#A0A0A0"></div><div class="a" style="left:301px;top:305px;width:2px;height:2px;background:#A0A0A0"></div><div class="a" style="left:349px;top:369px;width:2px;height:2px;background:#A0A0A0"></div><div class="a" style="left:352px;top:369px;width:2px;height:2px;background:#A0A0A0"></div><div class="a" style="left:355px;top:369px;width:2px;height:2px;background:#A0A0A0"></div><div class="a" style="left:9px;top:722px;width:867px;height:23px;background:#F5F5F5"></div><div class="a" style="left:8px;top:745px;width:868px;height:1px;background:#CCCEDB"></div><div class="a" style="left:9px;top:723px;width:75px;height:21px;background:#FFFFFF;border:1px solid #CCCEDB"></div><span class="t" id="t59" style="left:13px;top:726.00px;font-size:15px;color:#1E1E1E;font-weight:normal;font-family:'Liberation Sans';letter-spacing:-1.137px">100 %</span><svg class="a" style="left:71px;top:732px;" width="7" height="4" viewBox="0 0 7 4"><path d="M0 0 L7 0 L3.5 4 Z" fill="#717171"/></svg><svg class="a" style="left:114px;top:726px;" width="14" height="14" viewBox="0 0 14 14"><circle cx="7" cy="7" r="7" fill="#388A34"/><path d="M3.5 7.5 L6 10 L10.5 4.5" fill="none" stroke="#fff" stroke-width="2"/></svg><span class="t" id="t60" style="left:134px;top:727.00px;font-size:15px;color:#1E1E1E;font-weight:normal;font-family:'Liberation Sans';letter-spacing:-0.622px">No se encontraron problemas.</span><div class="a" style="left:332px;top:726px;width:1px;height:17px;background:#CCCEDB"></div><svg class="a" style="left:351px;top:726px;" width="16" height="14" viewBox="0 0 16 14"><path d="M6 1 L14 5 L10 13 C8 12 4 11 1 9 Z" fill="#717171"/><path d="M9 3 L12 -1" stroke="#717171" stroke-width="2"/><path d="M3 8 L10 11" stroke="#F5F5F5" stroke-width="1"/></svg><svg class="a" style="left:372px;top:731px;" width="7" height="4" viewBox="0 0 7 4"><path d="M0 0 L7 0 L3.5 4 Z" fill="#424242"/></svg><div class="a" style="left:1497px;top:118px;width:384px;height:627px;background:#F5F5F5;border:1px solid #CCCEDB"></div><div class="a" style="left:1498px;top:119px;width:382px;height:27px;background:#EEEEF2"></div><span class="t" id="t61" style="left:1503px;top:125.00px;font-size:15px;color:#424242;font-weight:normal;font-family:'Liberation Sans';letter-spacing:-0.036px">Herramientas de diagnóstico</span><svg class="a" style="left:1704px;top:129px" width="104" height="7"><defs><pattern id="p6" width="5" height="5" patternUnits="userSpaceOnUse"><rect x="0" y="0" width="1.2" height="1.2" fill="#8E8E8E"/><rect x="2.5" y="2.5" width="1.2" height="1.2" fill="#BDBDC2"/></pattern></defs><rect width="104" height="7" fill="url(#p6)"/></svg><svg class="a" style="left:1818px;top:130px;" width="10" height="6" viewBox="0 0 10 6"><path d="M0 0 H10 L5 6 Z" fill="#1E1E1E"/></svg><svg class="a" style="left:1839px;top:125px;" width="9" height="14" viewBox="0 0 9 14"><path d="M2 0.7 H7 M2.5 0.7 V7 M6.5 0.7 V7 M0.5 7.5 H8.5 M4.5 7.5 V13.5" fill="none" stroke="#1E1E1E" stroke-width="1.6"/><rect x="2.5" y="1" width="2" height="6" fill="#1E1E1E"/></svg><svg class="a" style="left:1859px;top:127px;" width="11" height="10" viewBox="0 0 11 10"><path d="M0.8 0.8 L10.2 9.2 M10.2 0.8 L0.8 9.2" stroke="#1E1E1E" stroke-width="1.8"/></svg><div class="a" style="left:1498px;top:146px;width:361px;height:34px;background:#EEEEF2"></div><svg class="a" style="left:1660px;top:154px;" width="16" height="17" viewBox="0 0 16 17"><path d="M3 11 V16 M7 7 V16 M11 9 V16 M15 12 V16" stroke="#717171" stroke-width="2"/><path d="M1 4 C1 1 6 1 6 3.5 C6 5 4 5.5 4 7" fill="none" stroke="#717171" stroke-width="1.2"/></svg><div class="a" style="left:1859px;top:146px;width:20px;height:356px;background:#E8E8EC"></div><svg class="a" style="left:1861px;top:161px;" width="17" height="12" viewBox="0 0 17 12"><path d="M1 10 L8.5 2.5 L16 10" fill="none" stroke="#86899A" stroke-width="3"/></svg><div class="a" style="left:1860px;top:180px;width:18px;height:260px;background:#C2C3C9"></div><svg class="a" style="left:1861px;top:474px;" width="17" height="12" viewBox="0 0 17 12"><path d="M1 2 L8.5 9.5 L16 2" fill="none" stroke="#86899A" stroke-width="3"/></svg><span class="t" id="t62" style="left:1659px;top:185.00px;font-size:15px;color:#1E1E1E;font-weight:normal;font-family:'Liberation Sans';-webkit-text-stroke:0.35px #1E1E1E;letter-spacing:-0.069px">: 0 segundo(s)</span><div class="a" style="left:1498px;top:206px;width:361px;height:1px;background:#CCCEDB"></div><div class="a" style="left:1498px;top:234px;width:361px;height:1px;background:#CCCEDB"></div><div class="a" style="left:1699px;top:206px;width:1px;height:28px;background:#CCCEDB"></div><span class="t" id="t63" style="left:1703px;top:210.00px;font-size:15px;color:#424242;font-weight:normal;font-family:'Liberation Sans';letter-spacing:-0.786px">10 s</span><div class="a" style="left:1668px;top:229px;width:1px;height:4px;background:#CCCEDB"></div><div class="a" style="left:1730px;top:229px;width:1px;height:4px;background:#CCCEDB"></div><div class="a" style="left:1762px;top:229px;width:1px;height:4px;background:#CCCEDB"></div><div class="a" style="left:1793px;top:229px;width:1px;height:4px;background:#CCCEDB"></div><div class="a" style="left:1812px;top:207px;width:7px;height:27px;background:#1E1E1E"></div><div class="a" style="left:1500px;top:261px;width:314px;height:29px;border:1px solid #CCCEDB"></div><div class="a" style="left:1699px;top:261px;width:1px;height:29px;background:#CCCEDB"></div><span class="t" id="t64" style="left:1664px;top:295.00px;font-size:15px;color:#1E1E1E;font-weight:normal;font-family:'Liberation Sans';-webkit-text-stroke:0.35px #1E1E1E;letter-spacing:-0.167px">(MB)</span><svg class="a" style="left:1739px;top:296px;" width="9" height="14" viewBox="0 0 9 14"><path d="M0 0 H9 L6 11 C5.5 13.5 3.5 13.5 3 11 Z" fill="#F6B000"/></svg><svg class="a" style="left:1765px;top:295px;" width="16" height="13" viewBox="0 0 16 13"><path d="M0 0 H16 L8 12.5 Z" fill="#1C79D4"/></svg><div class="a" style="left:1796px;top:295px;width:15px;height:15px;border-radius:50%;background:#73AFCC"></div><div class="a" style="left:1500px;top:315px;width:314px;height:87px;border:1px solid #CCCEDB"></div><div class="a" style="left:1699px;top:315px;width:1px;height:87px;background:#CCCEDB"></div><span class="t" id="t65" style="left:1820px;top:319.00px;font-size:15px;color:#1E1E1E;font-weight:normal;font-family:'Liberation Sans';letter-spacing:-0.688px">38</span><span class="t" id="t66" style="left:1820px;top:385.00px;font-size:15px;color:#1E1E1E;font-weight:normal;font-family:'Liberation Sans';letter-spacing:-0.344px">0</span><span class="t" id="t67" style="left:1661px;top:408.00px;font-size:15px;color:#1E1E1E;font-weight:normal;font-family:'Liberation Sans';-webkit-text-stroke:0.35px #1E1E1E;letter-spacing:-0.074px">procesadores)</span><div class="a" style="left:1500px;top:428px;width:314px;height:75px;border:1px solid #CCCEDB"></div><div class="a" style="left:1699px;top:428px;width:1px;height:75px;background:#CCCEDB"></div><span class="t" id="t68" style="left:1820px;top:431.00px;font-size:15px;color:#1E1E1E;font-weight:normal;font-family:'Liberation Sans';letter-spacing:-0.516px">100</span><span class="t" id="t69" style="left:1820px;top:497.00px;font-size:15px;color:#1E1E1E;font-weight:normal;font-family:'Liberation Sans';letter-spacing:-0.344px">0</span><div class="a" style="left:1498px;top:502px;width:382px;height:4px;background:#DCDCE0"></div><div class="a" style="left:1498px;top:507px;width:382px;height:29px;background:#F5F5F5"></div><span class="t" id="t70" style="left:1661px;top:517.00px;font-size:15px;color:#1E1E1E;font-weight:normal;font-family:'Liberation Sans';letter-spacing:-0.102px">so de memoria</span><span class="t" id="t71" style="left:1774px;top:517.00px;font-size:15px;color:#1E1E1E;font-weight:normal;font-family:'Liberation Sans';letter-spacing:-0.708px">Uso de CPU</span><div class="a" style="left:1498px;top:535px;width:382px;height:2px;background:#E0E0E6"></div><div class="a" style="left:1498px;top:566px;width:382px;height:1px;background:#DCDCE4"></div><div class="a" style="left:1498px;top:602px;width:382px;height:1px;background:#DCDCE4"></div><div class="a" style="left:1498px;top:631px;width:382px;height:1px;background:#DCDCE4"></div><div class="a" style="left:1498px;top:667px;width:382px;height:1px;background:#DCDCE4"></div><div class="a" style="left:1498px;top:696px;width:382px;height:1px;background:#DCDCE4"></div><span class="t" id="t72" style="left:1655px;top:578.00px;font-size:15px;color:#1E1E1E;font-weight:normal;font-family:'Liberation Sans';letter-spacing:0.185px">(1 de 1)</span><span class="t" id="t73" style="left:1659px;top:644.00px;font-size:15px;color:#1E1E1E;font-weight:normal;font-family:'Liberation Sans';letter-spacing:-0.344px">a</span><span class="t" id="t74" style="left:1651px;top:707.00px;font-size:15px;color:#1E1E1E;font-weight:normal;font-family:'Liberation Sans';letter-spacing:-1.336px">CPU</span><div class="a" style="left:1911px;top:119px;width:8px;height:165px;background:#CCCEDB"></div><div class="a" style="left:1911px;top:299px;width:8px;height:95px;background:#CCCEDB"></div><div class="t" style="left:1890px;top:119px;font-size:15px;color:#424242;transform-origin:0 0;transform:translate(14px,0) rotate(90deg);letter-spacing:-0.15px">Explorador de soluciones</div><div class="t" style="left:1890px;top:299px;font-size:15px;color:#424242;transform-origin:0 0;transform:translate(14px,0) rotate(90deg);letter-spacing:-0.1px">Team Explorer</div><div class="a" style="left:8px;top:754px;width:928px;height:215px;background:#F5F5F5;border:1px solid #CCCEDB"></div><div class="a" style="left:9px;top:754px;width:927px;height:27px;background:#007ACC"></div><span class="t" id="t75" style="left:14px;top:760.00px;font-size:15px;color:#FFFFFF;font-weight:normal;font-family:'Liberation Sans';letter-spacing:0.106px">Automático</span><svg class="a" style="left:101px;top:764px" width="761" height="7"><defs><pattern id="p7" width="5" height="5" patternUnits="userSpaceOnUse"><rect x="0" y="0" width="1.2" height="1.2" fill="#66B0EA"/><rect x="2.5" y="2.5" width="1.2" height="1.2" fill="#3B92D8"/></pattern></defs><rect width="761" height="7" fill="url(#p7)"/></svg><svg class="a" style="left:870px;top:764px;" width="10" height="6" viewBox="0 0 10 6"><path d="M0 0 H10 L5 6 Z" fill="#FFFFFF"/></svg><div class="a" style="left:9px;top:781px;width:927px;height:31px;background:#EEEEF2"></div><div class="a" style="left:9px;top:782px;width:281px;height:27px;background:#FFFFFF;border:1px solid #CCCEDB"></div><span class="t" id="t76" style="left:15px;top:790.00px;font-size:15px;color:#717171;font-weight:normal;font-family:'Liberation Sans';letter-spacing:-0.424px">Buscar (Ctrl+E)</span><svg class="a" style="left:255px;top:788px;" width="16" height="16" viewBox="0 0 16 16"><circle cx="10" cy="6" r="4.6" fill="none" stroke="#424242" stroke-width="2"/><path d="M7 9.5 L1.5 15" stroke="#424242" stroke-width="2.6" stroke-linecap="round"/></svg><svg class="a" style="left:279px;top:795px;" width="6" height="3" viewBox="0 0 6 3"><path d="M0 0 L6 0 L3.0 3 Z" fill="#424242"/></svg><svg class="a" style="left:300px;top:788px;" width="18" height="14" viewBox="0 0 18 14"><path d="M17 7 H2 M7.5 1.5 L2 7 L7.5 12.5" fill="none" stroke="#C6C6C6" stroke-width="2"/></svg><svg class="a" style="left:325px;top:788px;" width="18" height="14" viewBox="0 0 18 14"><path d="M1 7 H16 M10.5 1.5 L16 7 L10.5 12.5" fill="none" stroke="#C6C6C6" stroke-width="2"/></svg><span class="t" id="t77" style="left:354px;top:790.00px;font-size:15px;color:#1E1E1E;font-weight:normal;font-family:'Liberation Sans';letter-spacing:-0.086px">Profundidad de búsqueda:</span><div class="a" style="left:536px;top:784px;width:50px;height:25px;background:#FFFFFF;border:1px solid #CCCEDB"></div><span class="t" id="t78" style="left:542px;top:790.00px;font-size:15px;color:#1E1E1E;font-weight:normal;font-family:'Liberation Sans';letter-spacing:-0.344px">3</span><svg class="a" style="left:572px;top:795px;" width="7" height="4" viewBox="0 0 7 4"><path d="M0 0 L7 0 L3.5 4 Z" fill="#424242"/></svg><div class="a" style="left:595px;top:786px;width:1px;height:22px;background:#CCCEDB"></div><svg class="a" style="left:605px;top:788px;" width="16" height="16" viewBox="0 0 16 16"><path d="M0.6 0.6 H15.4 L9 8.3 V15.4 H7 V8.3 Z" fill="#3C3C3C"/></svg><div class="a" style="left:627px;top:783px;width:27px;height:27px;border:1px solid #3399FF"></div><svg class="a" style="left:633px;top:787px;" width="14" height="18" viewBox="0 0 14 18"><path d="M1.2 17.6 L7 1.2 L12.8 17.6 M3.6 11.8 H10.4" fill="none" stroke="#3C3C3C" stroke-width="2.5" stroke-linejoin="round"/></svg><div class="a" style="left:9px;top:812px;width:927px;height:26px;background:#F5F5F5"></div><div class="a" style="left:19px;top:812px;width:1px;height:26px;background:#E6E6EA"></div><div class="a" style="left:317px;top:812px;width:1px;height:26px;background:#E6E6EA"></div><div class="a" style="left:764px;top:812px;width:1px;height:26px;background:#E6E6EA"></div><div class="a" style="left:9px;top:837px;width:927px;height:1px;background:#E6E6EA"></div><span class="t" id="t79" style="left:25px;top:818.00px;font-size:15px;color:#1E1E1E;font-weight:normal;font-family:'Liberation Sans';letter-spacing:0.328px">Nombre</span><span class="t" id="t80" style="left:323px;top:818.00px;font-size:15px;color:#1E1E1E;font-weight:normal;font-family:'Liberation Sans';letter-spacing:0.273px">Valor</span><span class="t" id="t81" style="left:770px;top:818.00px;font-size:15px;color:#1E1E1E;font-weight:normal;font-family:'Liberation Sans';letter-spacing:0.792px">Tipo</span><div class="a" style="left:41px;top:839px;width:895px;height:20px;background:#CCCEDB"></div><div class="a" style="left:317px;top:839px;width:1px;height:20px;background:#F5F5F5"></div><div class="a" style="left:764px;top:839px;width:1px;height:20px;background:#F5F5F5"></div><div class="a" style="left:19px;top:859px;width:917px;height:1px;background:#ECECEC"></div><div class="a" style="left:19px;top:880px;width:917px;height:1px;background:#ECECEC"></div><svg class="a" style="left:27px;top:844px;" width="6" height="10" viewBox="0 0 6 10"><path d="M0.8 0.8 L5 5 L0.8 9.2 Z" fill="none" stroke="#424242" stroke-width="1.4"/></svg><svg class="a" style="left:43px;top:842px;" width="14" height="13" viewBox="0 0 14 13"><path d="M7 0.5 L13.5 3 V9.5 L7 12.5 L0.5 9.5 V3 Z" fill="#00539C"/><path d="M7 1.8 L11.5 3.6 L7 5.6 L2.5 3.6 Z" fill="#FFFFFF"/></svg><svg class="a" style="left:43px;top:863px;" width="14" height="13" viewBox="0 0 14 13"><path d="M7 0.5 L13.5 3 V9.5 L7 12.5 L0.5 9.5 V3 Z" fill="#00539C"/><path d="M7 1.8 L11.5 3.6 L7 5.6 L2.5 3.6 Z" fill="#FFFFFF"/></svg><span class="t" id="t82" style="left:66px;top:842.00px;font-size:15px;color:#1E1E1E;font-weight:normal;font-family:'Liberation Sans';letter-spacing:1.000px">lst</span><span class="t" id="t83" style="left:322px;top:842.00px;font-size:15px;color:#1E1E1E;font-weight:normal;font-family:'Liberation Sans';letter-spacing:-0.045px">Count = 1539</span><span class="t" id="t84" style="left:769px;top:842.00px;font-size:15px;color:#1E1E1E;font-weight:normal;font-family:'Liberation Sans';letter-spacing:-0.180px">System.Collectio</span><span class="t" id="t85" style="left:66px;top:863.00px;font-size:15px;color:#1E1E1E;font-weight:normal;font-family:'Liberation Sans';letter-spacing:-0.727px">strJson</span><span class="t" id="t86" style="left:322px;top:863.00px;font-size:15px;color:#1E1E1E;font-weight:normal;font-family:'Liberation Sans';letter-spacing:0.147px">&quot;{\&quot;d_codigo\&quot;:\&quot;01000\&quot;,\&quot;d_asenta\&quot;:\&quot;San Ángel\&quot;,\&quot;d_tip...</span><div class="a" style="left:729px;top:861px;width:35px;height:19px;background:#C9DEF5;border:1px solid #3399FF"></div><div class="a" style="left:747px;top:862px;width:1px;height:17px;background:#3399FF"></div><svg class="a" style="left:731px;top:863px;" width="14" height="14" viewBox="0 0 14 14"><circle cx="5.5" cy="5.5" r="4.3" fill="none" stroke="#1E1E1E" stroke-width="1.4"/><path d="M8.5 8.5 L13 13" stroke="#1E1E1E" stroke-width="2"/></svg><svg class="a" style="left:752px;top:868px;" width="7" height="4" viewBox="0 0 7 4"><path d="M0 0 L7 0 L3.5 4 Z" fill="#1E1E1E"/></svg><span class="t" id="t87" style="left:769px;top:863.00px;font-size:15px;color:#1E1E1E;font-weight:normal;font-family:'Liberation Sans';letter-spacing:-0.138px">string</span><div class="a" style="left:8px;top:968px;width:91px;height:25px;background:#F5F5F5;border:1px solid #CCCEDB"></div><div class="a" style="left:9px;top:967px;width:89px;height:2px;background:#F5F5F5"></div><span class="t" id="t88" style="left:15px;top:973.00px;font-size:15px;color:#0E70C0;font-weight:normal;font-family:'Liberation Sans';letter-spacing:0.328px">Automático</span><span class="t" id="t89" style="left:107px;top:973.00px;font-size:15px;color:#444444;font-weight:normal;font-family:'Liberation Sans';letter-spacing:-0.143px">Variables locales</span><span class="t" id="t90" style="left:231px;top:973.00px;font-size:15px;color:#444444;font-weight:normal;font-family:'Liberation Sans';letter-spacing:-0.203px">Inspección 1</span><div class="a" style="left:944px;top:753px;width:936px;height:216px;background:#F5F5F5;border:1px solid #CCCEDB"></div><div class="a" style="left:945px;top:754px;width:934px;height:27px;background:#EEEEF2"></div><svg class="a" style="left:1000px;top:764px" width="807" height="7"><defs><pattern id="p8" width="5" height="5" patternUnits="userSpaceOnUse"><rect x="0" y="0" width="1.2" height="1.2" fill="#8E8E8E"/><rect x="2.5" y="2.5" width="1.2" height="1.2" fill="#BDBDC2"/></pattern></defs><rect width="807" height="7" fill="url(#p8)"/></svg><svg class="a" style="left:1817px;top:763px;" width="10" height="6" viewBox="0 0 10 6"><path d="M0 0 H10 L5 6 Z" fill="#1E1E1E"/></svg><svg class="a" style="left:1838px;top:760px;" width="9" height="14" viewBox="0 0 9 14"><path d="M2 0.7 H7 M2.5 0.7 V7 M6.5 0.7 V7 M0.5 7.5 H8.5 M4.5 7.5 V13.5" fill="none" stroke="#1E1E1E" stroke-width="1.6"/><rect x="2.5" y="1" width="2" height="6" fill="#1E1E1E"/></svg><svg class="a" style="left:1858px;top:762px;" width="11" height="10" viewBox="0 0 11 10"><path d="M0.8 0.8 L10.2 9.2 M10.2 0.8 L0.8 9.2" stroke="#1E1E1E" stroke-width="1.8"/></svg><div class="a" style="left:1820px;top:781px;width:1px;height:24px;background:#E6E6EA"></div><div class="a" style="left:945px;top:805px;width:913px;height:1px;background:#E6E6EA"></div><span class="t" id="t91" style="left:1826px;top:786.00px;font-size:15px;color:#1E1E1E;font-weight:normal;font-family:'Liberation Sans';letter-spacing:-0.792px">Leng</span><div class="a" style="left:945px;top:807px;width:913px;height:20px;background:#CCCEDB"></div><div class="a" style="left:1820px;top:807px;width:1px;height:20px;background:#F5F5F5"></div><span class="t" id="t92" style="left:1825px;top:810.00px;font-size:15px;color:#1E1E1E;font-weight:normal;font-family:'Liberation Sans';letter-spacing:-1.188px">C#</span><div class="a" style="left:944px;top:968px;width:123px;height:25px;background:#F5F5F5;border:1px solid #CCCEDB"></div><div class="a" style="left:945px;top:967px;width:121px;height:2px;background:#F5F5F5"></div><span class="t" id="t93" style="left:951px;top:973.00px;font-size:15px;color:#0E70C0;font-weight:normal;font-family:'Liberation Sans';letter-spacing:-0.071px">Pila de llamadas</span><span class="t" id="t94" style="left:1074px;top:973.00px;font-size:15px;color:#444444;font-weight:normal;font-family:'Liberation Sans';letter-spacing:-0.053px">Puntos de interrupción</span><span class="t" id="t95" style="left:1237px;top:973.00px;font-size:15px;color:#444444;font-weight:normal;font-family:'Liberation Sans';letter-spacing:-0.073px">Configuración de excepciones</span><span class="t" id="t96" style="left:1450px;top:973.00px;font-size:15px;color:#444444;font-weight:normal;font-family:'Liberation Sans';letter-spacing:-0.251px">Ventana Comandos</span><span class="t" id="t97" style="left:1592px;top:973.00px;font-size:15px;color:#444444;font-weight:normal;font-family:'Liberation Sans';letter-spacing:-0.007px">Ventana Inmediato</span><span class="t" id="t98" style="left:1731px;top:973.00px;font-size:15px;color:#444444;font-weight:normal;font-family:'Liberation Sans';letter-spacing:-0.141px">Salida</span><div class="a" style="left:0px;top:1000px;width:1919px;height:32px;background:#CA5100"></div><svg class="a" style="left:6px;top:1008px;" width="19" height="15" viewBox="0 0 19 15"><path d="M4 1 H18 L15 14 H1 Z" fill="none" stroke="#FFFFFF" stroke-width="1.6"/></svg><span class="t" id="t99" style="left:35px;top:1008.00px;font-size:15px;color:#FFFFFF;font-weight:normal;font-family:'Liberation Sans';letter-spacing:-0.172px">Listo</span><svg class="a" style="left:1574px;top:1008px;" width="12" height="15" viewBox="0 0 12 15"><path d="M6 14.5 V1.5 M1 6.5 L6 1.5 L11 6.5" fill="none" stroke="#FFFFFF" stroke-width="1.8"/></svg><span class="t" id="t100" style="left:1597px;top:1008.00px;font-size:15px;color:#FFFFFF;font-weight:normal;font-family:'Liberation Sans';letter-spacing:0.132px">Agregar al control de código fuente</span><svg class="a" style="left:1843px;top:1011px;" width="10" height="6" viewBox="0 0 10 6"><path d="M0 6 H10 L5 0 Z" fill="#FFFFFF"/></svg><svg class="a" style="left:1880px;top:1005px;" width="18" height="19" viewBox="0 0 18 19"><path d="M9 1.5 C5 1.5 3.5 4.5 3.5 8 V12 L1 15 H17 L14.5 12 V8 C14.5 4.5 13 1.5 9 1.5 Z" fill="#FFFFFF"/><path d="M6.5 16 C6.5 19 11.5 19 11.5 16 Z" fill="#FFFFFF"/></svg><div class="a" style="left:876px;top:146px;width:784px;height:742px;box-shadow:0 3px 18px 5px rgba(0,0,0,0.30)"></div><div class="a" style="left:876px;top:146px;width:784px;height:742px;background:#F0F0F0;border:1px solid #707070"></div><div class="a" style="left:877px;top:147px;width:782px;height:37px;background:#FFFFFF"></div><span class="t" id="t101" style="left:886px;top:158.00px;font-size:15px;color:#1E1E1E;font-weight:normal;font-family:'Liberation Sans';letter-spacing:-0.352px">Visualizador JSON</span><div class="a" style="left:1506px;top:164px;width:12px;height:1px;background:#C8C8C8"></div><div class="a" style="left:1564px;top:159px;width:12px;height:12px;border:1px solid #1E1E1E"></div><svg class="a" style="left:1622px;top:159px;" width="13" height="13" viewBox="0 0 13 13"><path d="M0.5 0.5 L12.5 12.5 M12.5 0.5 L0.5 12.5" stroke="#1E1E1E" stroke-width="1.2"/></svg><span class="t" id="t102" style="left:898px;top:214.00px;font-size:15px;color:#1E1E1E;font-weight:normal;font-family:'Liberation Sans';letter-spacing:-0.431px">Expresión:</span><div class="a" style="left:1034px;top:210px;width:604px;height:22px;background:#F0F0F0;border:1px solid #ABADB3"></div><span class="t" id="t103" style="left:1037px;top:214.00px;font-size:15px;color:#1E1E1E;font-weight:normal;font-family:'Liberation Sans';letter-spacing:-0.560px">strJson</span><span class="t" id="t104" style="left:898px;top:252.00px;font-size:15px;color:#1E1E1E;font-weight:normal;font-family:'Liberation Sans';letter-spacing:-0.216px">Valor:</span><div class="a" style="left:898px;top:275px;width:740px;height:554px;background:#FFFFFF;border:1px solid #ABADB3"></div><div class="a" style="left:898px;top:275px;width:740px;height:2px;background:#ABADB3"></div><div class="a" style="left:899px;top:276px;width:738px;height:27px;background:#FFFFFF"></div><div class="a" style="left:899px;top:302px;width:738px;height:2px;background:#ABADB3"></div><span class="t" id="t105" style="left:905px;top:283.00px;font-size:15px;color:#8C8C8C;font-weight:normal;font-family:'Liberation Sans';letter-spacing:-0.738px">Buscar</span><svg class="a" style="left:1602px;top:281px;" width="17" height="17" viewBox="0 0 17 17"><circle cx="10.5" cy="6" r="4.6" fill="none" stroke="#424242" stroke-width="2"/><path d="M7.5 9.5 L2 15" stroke="#424242" stroke-width="2.6" stroke-linecap="round"/></svg><svg class="a" style="left:1623px;top:289px;" width="6" height="3" viewBox="0 0 6 3"><path d="M0 0 L6 0 L3.0 3 Z" fill="#424242"/></svg><div class="a" style="left:1617px;top:303px;width:20px;height:503px;background:#F0F0F0"></div><svg class="a" style="left:1621px;top:310px;" width="12" height="7" viewBox="0 0 12 7"><path d="M1 6 L6 1 L11 6" fill="none" stroke="#CDCDCD" stroke-width="1.8"/></svg><svg class="a" style="left:1621px;top:793px;" width="12" height="7" viewBox="0 0 12 7"><path d="M1 1 L6 6 L11 1" fill="none" stroke="#CDCDCD" stroke-width="1.8"/></svg><div class="a" style="left:899px;top:806px;width:738px;height:22px;background:#F0F0F0"></div><svg class="a" style="left:905px;top:811px;" width="7" height="12" viewBox="0 0 7 12"><path d="M6 1 L1 6 L6 11" fill="none" stroke="#CDCDCD" stroke-width="1.8"/></svg><svg class="a" style="left:1602px;top:811px;" width="7" height="12" viewBox="0 0 7 12"><path d="M1 1 L6 6 L1 11" fill="none" stroke="#CDCDCD" stroke-width="1.8"/></svg><svg class="a" style="left:907px;top:312px;" width="9" height="9" viewBox="0 0 9 9"><path d="M9 0 V9 H0 Z" fill="#595959"/></svg><span class="t" id="t106" style="left:925px;top:310.70px;font-size:16.5px;color:#1E1E1E;font-weight:normal;font-family:'Liberation Sans';letter-spacing:0.163px">[JSON]</span><span class="t" id="t107" style="left:949px;top:335.70px;font-size:16.5px;color:#1E1E1E;font-weight:normal;font-family:'Liberation Sans';letter-spacing:0.766px">d_codigo: &quot;01000&quot;</span><span class="t" id="t108" style="left:949px;top:360.70px;font-size:16.5px;color:#1E1E1E;font-weight:normal;font-family:'Liberation Sans';letter-spacing:0.304px">d_asenta: &quot;San Ángel&quot;</span><span class="t" id="t109" style="left:949px;top:385.70px;font-size:16.5px;color:#1E1E1E;font-weight:normal;font-family:'Liberation Sans';letter-spacing:0.456px">d_tipo_asenta: &quot;Colonia&quot;</span><span class="t" id="t110" style="left:949px;top:410.70px;font-size:16.5px;color:#1E1E1E;font-weight:normal;font-family:'Liberation Sans';letter-spacing:0.813px">D_mnpio: &quot;Álvaro Obregón&quot;</span><span class="t" id="t111" style="left:949px;top:435.70px;font-size:16.5px;color:#1E1E1E;font-weight:normal;font-family:'Liberation Sans';letter-spacing:0.524px">d_estado: &quot;Ciudad de México&quot;</span><span class="t" id="t112" style="left:949px;top:460.70px;font-size:16.5px;color:#1E1E1E;font-weight:normal;font-family:'Liberation Sans';letter-spacing:0.558px">d_ciudad: &quot;Ciudad de México&quot;</span><span class="t" id="t113" style="left:949px;top:485.70px;font-size:16.5px;color:#1E1E1E;font-weight:normal;font-family:'Liberation Sans';letter-spacing:-0.087px">d_CP: &quot;01001&quot;</span><span class="t" id="t114" style="left:949px;top:510.70px;font-size:16.5px;color:#1E1E1E;font-weight:normal;font-family:'Liberation Sans';letter-spacing:-0.708px">c_estado: &quot;09&quot;</span><span class="t" id="t115" style="left:949px;top:535.70px;font-size:16.5px;color:#1E1E1E;font-weight:normal;font-family:'Liberation Sans';letter-spacing:0.418px">c_oficina: &quot;01001&quot;</span><span class="t" id="t116" style="left:949px;top:560.70px;font-size:16.5px;color:#1E1E1E;font-weight:normal;font-family:'Liberation Sans';letter-spacing:0.254px">c_tipo_asenta: &quot;010&quot;</span><span class="t" id="t117" style="left:949px;top:585.70px;font-size:16.5px;color:#1E1E1E;font-weight:normal;font-family:'Liberation Sans';letter-spacing:0.645px">c_mnpio: &quot;0001&quot;</span><span class="t" id="t118" style="left:949px;top:610.70px;font-size:16.5px;color:#1E1E1E;font-weight:normal;font-family:'Liberation Sans';letter-spacing:0.359px">id_asenta_cpcons: &quot;Urbano&quot;</span><span class="t" id="t119" style="left:949px;top:635.70px;font-size:16.5px;color:#1E1E1E;font-weight:normal;font-family:'Liberation Sans';letter-spacing:0.420px">d_zona: &quot;01&quot;</span><span class="t" id="t120" style="left:949px;top:660.70px;font-size:16.5px;color:#1E1E1E;font-weight:normal;font-family:'Liberation Sans';letter-spacing:0.073px">c_cve_ciudad: null</span><span class="t" id="t121" style="left:949px;top:685.70px;font-size:16.5px;color:#1E1E1E;font-weight:normal;font-family:'Liberation Sans';letter-spacing:-0.177px">c_CP: &quot;09&quot;</span><div class="a" style="left:1544px;top:841px;width:94px;height:24px;background:#E1E1E1;border:1px solid #7A7A7A"></div><span class="t" id="t122" style="left:1571px;top:846.00px;font-size:15px;color:#1E1E1E;font-weight:normal;font-family:'Liberation Sans';letter-spacing:-0.503px">Cerrar</span><div class="a" style="left:0px;top:1030px;width:1919px;height:2px;background:#243A3A"></div><div class="a" style="left:250px;top:1030px;width:61px;height:2px;background:#5A6868"></div>
</body></html>
